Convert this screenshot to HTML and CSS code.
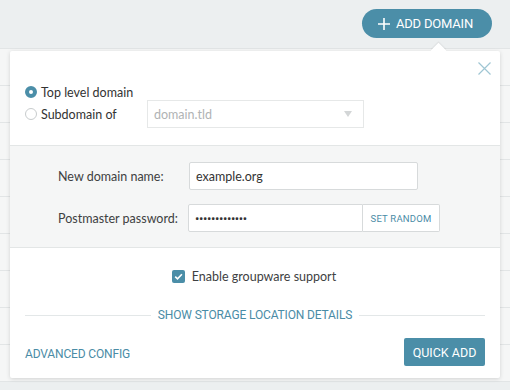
FILE: index.html
```html
<!DOCTYPE html>
<html lang="en">
<head>
	<meta charset="utf-8">
	<title>Add domain</title>
	<link rel="stylesheet" href="styles.css">
</head>
<body>

	<div class="topbar">
		<button class="addBtn">
			<svg class="plus" width="12" height="12" viewBox="0 0 12 12"><path d="M6 0V12M0 6H12" stroke="#fff" stroke-width="1.6" fill="none"/></svg>
			ADD DOMAIN
		</button>
	</div>

	<div class="list">
		<div class="row"></div>
		<div class="row"></div>
		<div class="row"></div>
		<div class="row"></div>
		<div class="row"></div>
		<div class="row"></div>
		<div class="row"></div>
		<div class="row"></div>
		<div class="row"></div>
	</div>

	<div class="popover">
		<a class="close" href="#">
			<svg width="13" height="13" viewBox="0 0 13 13"><path d="M0.5 0.5L12.5 12.5M12.5 0.5L0.5 12.5" stroke="#9fc6d3" stroke-width="1.2" fill="none"/></svg>
		</a>

		<div class="scope">
			<div class="radios">
				<label class="radio"><span class="dot dot-on"></span>Top level domain</label>
				<label class="radio"><span class="dot"></span>Subdomain of</label>
			</div>
			<div class="select">
				<span>domain.tld</span>
				<span class="caret"></span>
			</div>
		</div>

		<div class="fields">
			<div class="field">
				<label>New domain name:</label>
				<input class="ipt ipt-name" type="text" value="example.org">
			</div>
			<div class="field">
				<label>Postmaster password:</label>
				<div class="group">
					<input class="ipt ipt-pass" type="password" value="abcdefghijklm">
					<button class="rndBtn">SET RANDOM</button>
				</div>
			</div>
		</div>

		<div class="check">
			<span class="box">
				<svg width="13" height="13" viewBox="0 0 13 13"><path d="M3.2 6.6L5.5 8.9L9.9 4.2" stroke="#fff" stroke-width="1.6" fill="none"/></svg>
			</span>
			Enable groupware support
		</div>

		<div class="divider"><a href="#">SHOW STORAGE LOCATION DETAILS</a></div>

		<div class="footer">
			<a href="#">ADVANCED CONFIG</a>
			<button class="quickBtn">QUICK ADD</button>
		</div>
	</div>

</body>
</html>
```

FILE: styles.css
```css
body{
	margin: 0;
	background: #eceff0;
	font-family: Lato, Roboto, sans-serif;
	font-size: 12.5px;
	color: #3e4142;
}
a{
	color: #4a8ca6;
	text-decoration: none;
	font-family: Roboto, Lato, sans-serif;
}
button{
	font-family: Roboto, Lato, sans-serif;
	cursor: pointer;
	white-space: nowrap;
}

.topbar{
	height: 48px;
	display: flex;
	justify-content: flex-end;
	align-items: flex-start;
	padding: 9px 18px 0 0;
	box-sizing: border-box;
}
.addBtn{
	display: flex;
	align-items: center;
	width: 130px;
	height: 29px;
	padding: 0 0 0 16px;
	border: 0;
	border-radius: 15px;
	background: #4b8ea8;
	color: #fff;
	font-size: 13px;
	letter-spacing: -0.2px;
}
.addBtn .plus{
	margin-right: 6px;
}

.list{
	border-top: 1px solid #e2e5e6;
	background: #f5f6f6;
}
.list .row{
	height: 36px;
	border-bottom: 1px solid #e2e5e6;
}

.popover{
	position: absolute;
	left: 10px;
	top: 51px;
	width: 490px;
	height: 327px;
	background: #fff;
	box-shadow: 0 1px 4px rgba(0,0,0,0.15);
	border-radius: 2px;
}
.popover:before{
	content: '';
	position: absolute;
	left: 423px;
	top: -6px;
	width: 11px;
	height: 11px;
	background: #fff;
	transform: rotate(45deg);
	box-shadow: -1px -1px 1px rgba(0,0,0,0.06);
}
.close{
	position: absolute;
	right: 9px;
	top: 11px;
	line-height: 0;
}

.scope{
	display: flex;
	padding: 30px 15px 17px;
}
.radios{
	width: 122px;
}
.radio{
	display: flex;
	align-items: center;
	height: 22px;
	color: #333;
	white-space: nowrap;
}
.dot{
	width: 12px;
	height: 12px;
	margin-right: 4px;
	border: 1px solid #c8cccd;
	border-radius: 50%;
	box-sizing: border-box;
	background: #fff;
}
.dot-on{
	border: 4px solid #4b8ea8;
	background: #fff;
}
.select{
	display: flex;
	align-items: center;
	justify-content: space-between;
	width: 217px;
	height: 28px;
	margin-top: 19px;
	padding: 0 11px 0 6px;
	border: 1px solid #e6e8e8;
	box-sizing: border-box;
	color: #b0b3b4;
}
.caret{
	width: 0;
	height: 0;
	border-left: 4px solid transparent;
	border-right: 4px solid transparent;
	border-top: 6px solid #d3d6d7;
}

.fields{
	background: #f5f6f6;
	border-top: 1px solid #e3e6e6;
	border-bottom: 1px solid #e3e6e6;
	padding: 16px 0 15px 48px;
}
.field{
	display: flex;
	align-items: center;
}
.field + .field{
	margin-top: 14px;
}
.field label{
	width: 130px;
	white-space: nowrap;
}
.ipt{
	height: 28px;
	padding: 0 6px;
	border: 1px solid #d7dadb;
	border-radius: 2px;
	box-sizing: border-box;
	font-family: inherit;
	font-size: 12.5px;
	color: #333;
	background: #fff;
}
.ipt-name{
	width: 229px;
	margin-left: 1px;
}
.group{
	display: flex;
}
.ipt-pass{
	width: 175px;
	border-radius: 2px 0 0 2px;
	font-family: Roboto, sans-serif;
	font-size: 13px;
	letter-spacing: -0.4px;
}
.rndBtn{
	width: 77px;
	height: 28px;
	border: 1px solid #d7dadb;
	border-left: 0;
	border-radius: 0 2px 2px 0;
	background: #fff;
	color: #4a8ca6;
	font-size: 9.5px;
	letter-spacing: 0.2px;
}

.check{
	display: flex;
	align-items: center;
	justify-content: center;
	padding: 20px 0 0;
	height: 16px;
	gap: 7px;
	margin-left: -2px;
}
.check .box{
	width: 13px;
	height: 13px;
	border-radius: 2px;
	background: #4b8ea8;
	line-height: 0;
}

.divider{
	display: flex;
	align-items: center;
	margin: 24px 15px 0;
	gap: 7px;
}
.divider:before,
.divider:after{
	content: '';
	flex: 1;
	height: 1px;
	background: #e3e7e8;
}
.divider a{
	font-size: 12px;
	letter-spacing: -0.15px;
}

.footer{
	display: flex;
	align-items: center;
	justify-content: space-between;
	padding: 16px 15px 0;
}
.footer a{
	font-size: 12px;
	letter-spacing: -0.15px;
	margin-top: 4px;
}
.quickBtn{
	width: 81px;
	height: 28px;
	border: 0;
	border-radius: 2px;
	background: #4b8ea8;
	color: #fff;
	font-size: 12.5px;
}
```
